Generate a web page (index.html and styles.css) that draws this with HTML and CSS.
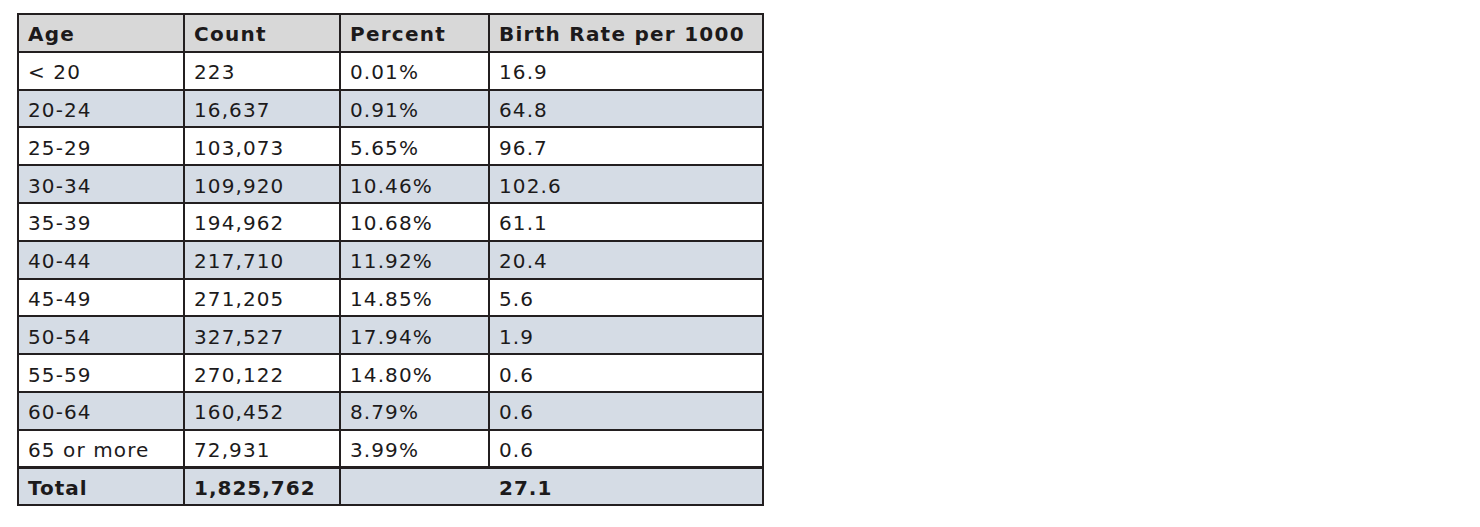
FILE: index.html
```html
<!DOCTYPE html>
<html lang="en">
<head>
<meta charset="utf-8">
<title>Births by Age</title>
<link rel="stylesheet" href="styles.css">
</head>
<body>
<table class="births">
  <colgroup>
    <col class="c-age"><col class="c-count"><col class="c-pct"><col class="c-rate">
  </colgroup>
  <thead>
    <tr class="head"><th>Age</th><th>Count</th><th>Percent</th><th>Birth Rate per 1000</th></tr>
  </thead>
  <tbody>
    <tr><td>&lt; 20</td><td>223</td><td>0.01%</td><td>16.9</td></tr>
    <tr class="alt"><td>20-24</td><td>16,637</td><td>0.91%</td><td>64.8</td></tr>
    <tr><td>25-29</td><td>103,073</td><td>5.65%</td><td>96.7</td></tr>
    <tr class="alt"><td>30-34</td><td>109,920</td><td>10.46%</td><td>102.6</td></tr>
    <tr><td>35-39</td><td>194,962</td><td>10.68%</td><td>61.1</td></tr>
    <tr class="alt"><td>40-44</td><td>217,710</td><td>11.92%</td><td>20.4</td></tr>
    <tr><td>45-49</td><td>271,205</td><td>14.85%</td><td>5.6</td></tr>
    <tr class="alt"><td>50-54</td><td>327,527</td><td>17.94%</td><td>1.9</td></tr>
    <tr><td>55-59</td><td>270,122</td><td>14.80%</td><td>0.6</td></tr>
    <tr class="alt"><td>60-64</td><td>160,452</td><td>8.79%</td><td>0.6</td></tr>
    <tr><td>65 or more</td><td>72,931</td><td>3.99%</td><td>0.6</td></tr>
  </tbody>
  <tfoot>
    <tr class="total"><td>Total</td><td>1,825,762</td><td colspan="2" class="span">27.1</td></tr>
  </tfoot>
</table>
</body>
</html>
```

FILE: styles.css
```css
html, body {
  margin: 0;
  padding: 0;
  background: #ffffff;
}

body {
  padding: 13px 0 0 17px;
  font-family: "DejaVu Sans", "Liberation Sans", sans-serif;
  color: #1c1a1b;
}

.births {
  border-collapse: collapse;
  border: 2px solid #231f20;
  font-size: 20px;
  line-height: 1;
  letter-spacing: 1.1px;
  table-layout: fixed;
  width: 745px;
}

.c-age { width: 166px; }
.c-count { width: 156px; }
.c-pct { width: 149px; }
.c-rate { width: 274px; }

.births th,
.births td {
  border: 2px solid #231f20;
  height: 37.8px;
  padding: 3px 8px 0 9px;
  text-align: left;
  vertical-align: middle;
  box-sizing: border-box;
  white-space: nowrap;
  font-weight: 400;
}

.births th {
  font-weight: 700;
  letter-spacing: 1.25px;
}

.head {
  background: #d8d8d8;
}

.alt {
  background: #d5dce5;
}

.total {
  background: #d5dce5;
}

.births .total td {
  border-top-width: 3px;
  font-weight: 700;
  letter-spacing: 1px;
}

.births td.span {
  padding-left: 158px;
}
```
